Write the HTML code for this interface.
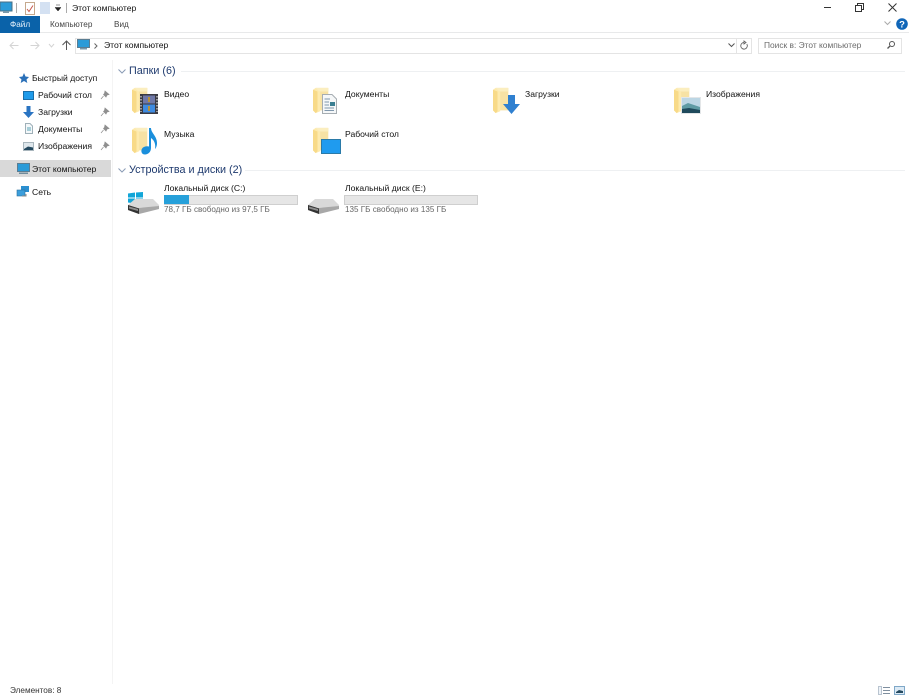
<!DOCTYPE html>
<html><head><meta charset="utf-8">
<style>
html,body{margin:0;padding:0;background:#fff;width:909px;height:699px;overflow:hidden}
#r{position:relative;width:909px;height:699px;font-family:"Liberation Sans",sans-serif;font-size:8.6px;color:#111;filter:blur(.35px)}
.t{position:absolute;white-space:nowrap;line-height:12px}
.b{position:absolute}
svg{position:absolute;overflow:visible}
.h{font-size:10.8px;color:#1e3a6e;line-height:14px}
.g{color:#666;font-size:8.1px}
.s{font-size:8.2px}
</style></head><body><div id="r">
<svg width="0" height="0">
<defs>
<symbol id="f" viewBox="0 0 20 28" overflow="visible">
<path d="M3 0H17V25H3z" fill="#f7e2a4"/>
<path d="M3 0H17V4H3z" fill="#fbeebf"/>
<path d="M0 2L3 0L8 5V26L3 28L0 25z" fill="#fdeaae"/>
<path d="M0 2L5 4V26L3 28L0 25z" fill="#f8da88"/>
</symbol>
<symbol id="d" viewBox="0 0 32 16" overflow="visible">
<path d="M7 1H25L31 7V9L8 10L0 7z" fill="#d9d9d9"/>
<path d="M0 7L10 10L31 8V11L11 16L0 12z" fill="#a8a8a8"/>
<path d="M0 7L11 10.500V16L0 12z" fill="#333"/>
<path d="M1 8.500L10 11V13L1 10.500z" fill="#8d8d8d"/>
</symbol>
<symbol id="pin" viewBox="0 0 8 8" overflow="visible">
<path d="M4 0L8 3.500L6 4L5 6L2.500 3.500L3.500 2.500z M2.500 5L0 8" fill="#8f8f8f" stroke="#8f8f8f" stroke-width=".7"/>
</symbol>
</defs>
</svg>

<!-- title bar -->
<svg style="left:-1px;top:1px" width="14" height="13"><rect x="1" y="1" width="12" height="9" fill="#2b9bd8" stroke="#4a6f85"/><rect x="4" y="10" width="6" height="2" fill="#7a98aa"/></svg>
<div class="b" style="left:16px;top:3px;width:1px;height:10px;background:#aaa"></div>
<svg style="left:25px;top:2px" width="10" height="13"><rect x=".5" y=".5" width="9" height="12" fill="#fff" stroke="#c5a98d"/><path d="M2 7L4 9.500L8 3.500" stroke="#c8574a" fill="none"/></svg>
<div class="b" style="left:40px;top:2px;width:10px;height:12px;background:#d4e1f2"></div>
<svg style="left:55px;top:5px" width="6" height="7"><path d="M1 0H5M0 2.500H6L3 6z" fill="#222" stroke="#222" stroke-width=".5"/></svg>
<div class="b" style="left:66px;top:3px;width:1px;height:10px;background:#aaa"></div>
<div class="t" style="left:72px;top:2px">Этот компьютер</div>
<div class="b" style="left:824px;top:7px;width:7px;height:1px;background:#333"></div>
<svg style="left:855px;top:3px" width="9" height="9"><path d="M.5 2.500H6.500V8.500H.5zM2.500 2.500V.5H8.500V6.500H6.500" fill="none" stroke="#333"/></svg>
<svg style="left:888px;top:3px" width="9" height="9"><path d="M.5 .5L8.500 8.500M8.500 .5L.5 8.500" stroke="#333"/></svg>

<!-- ribbon -->
<div class="b" style="left:0;top:16px;width:40px;height:17px;background:#0a62a9"></div>
<div class="t s" style="left:10px;top:19px;color:#e6f0fa">Файл</div>
<div class="t s" style="left:50px;top:19px;color:#444">Компьютер</div>
<div class="t s" style="left:114px;top:19px;color:#444">Вид</div>
<div class="b" style="left:40px;top:32px;width:869px;height:1px;background:#e8e9ea"></div>
<svg style="left:884px;top:21px" width="7" height="5"><path d="M.5 .5L3.500 3.500L6.500 .5" stroke="#aaa" fill="none"/></svg>
<svg style="left:896px;top:18px" width="12" height="12"><circle cx="6" cy="6" r="5.800" fill="#1066b8"/><text x="6" y="9.500" font-family="Liberation Sans" font-size="9.500" font-weight="bold" text-anchor="middle" fill="#fff">?</text></svg>

<!-- nav bar -->
<svg style="left:9px;top:41px" width="10" height="9"><path d="M9.500 4.500H1M4.500 1L1 4.500L4.500 8" stroke="#d4d4d4" fill="none"/></svg>
<svg style="left:30px;top:41px" width="10" height="9"><path d="M.5 4.500H9M5.500 1L9 4.500L5.500 8" stroke="#d4d4d4" fill="none"/></svg>
<svg style="left:49px;top:44px" width="5" height="3"><path d="M0 0L2.500 3L5 0" fill="none" stroke="#d4d4d4"/></svg>
<svg style="left:62px;top:40px" width="9" height="10"><path d="M4.500 10V1M.5 5L4.500 1L8.500 5" stroke="#555" fill="none"/></svg>
<div class="b" style="left:75px;top:38px;width:661px;height:14px;border:1px solid #e4e4e4;border-right:none"></div>
<div class="b" style="left:736px;top:38px;width:14px;height:14px;border:1px solid #e4e4e4"></div>
<svg style="left:77px;top:39px" width="13" height="11"><rect x=".5" y=".5" width="12" height="8" fill="#2b9bd8" stroke="#5b7d92"/><rect x="3" y="9" width="7" height="1.500" fill="#7a98aa"/></svg>
<svg style="left:94px;top:43px" width="4" height="6"><path d="M.5 .5L3 3L.5 5.500" stroke="#666" fill="none"/></svg>
<div class="t" style="left:104px;top:39px">Этот компьютер</div>
<svg style="left:728px;top:43px" width="7" height="5"><path d="M.5 .5L3.500 3.500L6.500 .5" stroke="#555" fill="none"/></svg>
<svg style="left:740px;top:41px" width="8" height="9"><path d="M6.800 3A3.300 3.300 0 1 1 4 1.500M4 0V3L6 1.500z" stroke="#666" fill="none" stroke-width=".9"/></svg>
<div class="b" style="left:758px;top:38px;width:142px;height:14px;border:1px solid #e4e4e4"></div>
<div class="t" style="left:764px;top:39px;color:#6d6d6d;font-size:8.4px">Поиск в: Этот компьютер</div>
<svg style="left:887px;top:41px" width="8" height="8"><circle cx="5" cy="3" r="2.500" fill="none" stroke="#555"/><path d="M3 5L.5 7.500" stroke="#555" stroke-width="1.300"/></svg>

<!-- sidebar -->
<div class="b" style="left:112px;top:60px;width:1px;height:624px;background:#f4f4f4"></div>
<svg style="left:19px;top:73px" width="10" height="10"><path d="M5 0L6.500 3.500L10 4L7.500 6.500L8.300 10L5 8L1.700 10L2.500 6.500L0 4L3.500 3.500z" fill="#2a70b8"/></svg>
<div class="t" style="left:32px;top:72px">Быстрый доступ</div>
<svg style="left:23px;top:91px" width="11" height="9"><rect x=".5" y=".5" width="10" height="8" fill="#1f9bea" stroke="#1a6ea8"/></svg>
<div class="t" style="left:38px;top:89px">Рабочий стол</div>
<svg style="left:23px;top:106px" width="11" height="12"><path d="M3.500 0H7.500V6H11L5.500 12L0 6H3.500z" fill="#2a74c2"/></svg>
<div class="t" style="left:38px;top:106px">Загрузки</div>
<svg style="left:25px;top:123px" width="8" height="11"><path d="M.5 .5H5L7.500 3V10.500H.5z" fill="#f4f8fa" stroke="#9fb0b8"/><path d="M2 5H6M2 7H6" stroke="#5aa3b5"/></svg>
<div class="t" style="left:38px;top:123px">Документы</div>
<svg style="left:23px;top:142px" width="11" height="9"><rect x=".5" y=".5" width="10" height="8" fill="#dfe7ec" stroke="#a9b6bd"/><path d="M1 7L5 4.500L10 5.500V8H1z" fill="#24495f"/></svg>
<div class="t" style="left:38px;top:140px">Изображения</div>
<svg style="left:101px;top:91px" width="8" height="8"><use href="#pin" width="8" height="8"/></svg>
<svg style="left:101px;top:108px" width="8" height="8"><use href="#pin" width="8" height="8"/></svg>
<svg style="left:101px;top:125px" width="8" height="8"><use href="#pin" width="8" height="8"/></svg>
<svg style="left:101px;top:142px" width="8" height="8"><use href="#pin" width="8" height="8"/></svg>
<div class="b" style="left:0;top:160px;width:111px;height:17px;background:#d9d9d9"></div>
<svg style="left:17px;top:163px" width="13" height="12"><rect x=".5" y=".5" width="12" height="8" fill="#2b9bd8" stroke="#5b7d92"/><rect x="2" y="9.500" width="9" height="1.500" fill="#6f8b9c"/></svg>
<div class="t" style="left:32px;top:163px">Этот компьютер</div>
<svg style="left:17px;top:186px" width="12" height="11"><rect x="4" y="0" width="8" height="6" fill="#2b8fd0"/><rect x="0" y="4" width="8" height="6" fill="#3c9edb" stroke="#2a6f9f" stroke-width=".6"/><path d="M5 10H9V8" stroke="#888" fill="none"/></svg>
<div class="t" style="left:32px;top:186px">Сеть</div>

<!-- Folders section -->
<svg style="left:118px;top:69px" width="8" height="5"><path d="M.5 .5L4 4L7.500 .5" stroke="#8a9bb5" fill="none"/></svg>
<div class="t h" style="left:129px;top:64px">Папки (6)</div>
<div class="b" style="left:181px;top:71px;width:724px;height:1px;background:#eef0f2"></div>

<svg style="left:132px;top:87px" width="18" height="27"><use href="#f" width="18" height="27"/></svg>
<svg style="left:140px;top:94px" width="18" height="20"><rect width="18" height="20" fill="#3a3a42"/><rect x="3" y="1.500" width="12" height="8" fill="#6f78a8"/><rect x="3" y="10.500" width="12" height="8" fill="#3f8be0"/><path d="M8 3H10V8H8zM8 12H10V17H8z" fill="#b8923a"/><path d="M1 2V18M17 2V18" stroke="#ddd" stroke-dasharray="1.500 1.500" stroke-width="1.200"/></svg>
<div class="t" style="left:164px;top:88px">Видео</div>

<svg style="left:313px;top:87px" width="18" height="27"><use href="#f" width="18" height="27"/></svg>
<svg style="left:322px;top:94px" width="15" height="20"><path d="M.5 .5H10L14.500 5V19.500H.5z" fill="#f5f7f8" stroke="#a6adb2"/><path d="M2.500 5H8M2.500 8H7M2.500 11H7M2.500 14H12M2.500 16.500H12" stroke="#7f97ad"/><rect x="8" y="8" width="5" height="4" fill="#3a7f92"/></svg>
<div class="t" style="left:345px;top:88px">Документы</div>

<svg style="left:493px;top:87px" width="18" height="27"><use href="#f" width="18" height="27"/></svg>
<svg style="left:503px;top:95px" width="17" height="19"><path d="M5 0H12V9H17L8.500 19L0 9H5z" fill="#2f80d0"/></svg>
<div class="t" style="left:525px;top:88px">Загрузки</div>

<svg style="left:674px;top:87px" width="18" height="27"><use href="#f" width="18" height="27"/></svg>
<svg style="left:681px;top:97px" width="20" height="17"><rect width="20" height="17" fill="#e3e6e8"/><rect x="1" y="1" width="18" height="15" fill="#bcd6e4"/><path d="M1 9L7 6L19 10V16H1z" fill="#5f9ba4"/><path d="M1 12L8 11L19 13V16H1z" fill="#1f4a5c"/></svg>
<div class="t" style="left:706px;top:88px">Изображения</div>

<svg style="left:132px;top:127px" width="18" height="27"><use href="#f" width="18" height="27"/></svg>
<svg style="left:141px;top:128px" width="17" height="27"><path d="M8 0H10C10 5 16 8 16 15C16 18 15 20 14 21C15 16 13 12 10 10V20C10 24 7 26.500 4 26.500C1 26.500 0 24 .500 22C1 19 5 17.500 8 18.500z" fill="#1a8fdc"/></svg>
<div class="t" style="left:164px;top:128px">Музыка</div>

<svg style="left:313px;top:127px" width="18" height="27"><use href="#f" width="18" height="27"/></svg>
<svg style="left:321px;top:139px" width="20" height="15"><rect x=".5" y=".5" width="19" height="14" fill="#1f9bef" stroke="#2a7aa8"/></svg>
<div class="t" style="left:345px;top:128px">Рабочий стол</div>

<!-- Drives -->
<svg style="left:118px;top:168px" width="8" height="5"><path d="M.5 .5L4 4L7.500 .5" stroke="#8a9bb5" fill="none"/></svg>
<div class="t h" style="left:129px;top:163px">Устройства и диски (2)</div>
<div class="b" style="left:245px;top:170px;width:660px;height:1px;background:#eef0f2"></div>

<svg style="left:128px;top:192px" width="15" height="12"><path d="M0 1.500L7 .5V5.500H0zM8 .5L15 0V5.500H8zM0 6.500H7V11.500L0 10.500zM8 6.500H15V12L8 11.500z" fill="#12a6d8"/></svg>
<svg style="left:128px;top:198px" width="32" height="16"><use href="#d" width="32" height="16"/></svg>
<div class="t" style="left:164px;top:182px">Локальный диск (C:)</div>
<div class="b" style="left:164px;top:195px;width:132px;height:8px;background:#e6e6e6;border:1px solid #cfcfcf"></div>
<div class="b" style="left:164px;top:195px;width:25px;height:9px;background:#26a0da"></div>
<div class="t g" style="left:164px;top:204px">78,7 ГБ свободно из 97,5 ГБ</div>

<svg style="left:308px;top:198px" width="32" height="16"><use href="#d" width="32" height="16"/></svg>
<div class="t" style="left:345px;top:182px">Локальный диск (E:)</div>
<div class="b" style="left:344px;top:195px;width:132px;height:8px;background:#e6e6e6;border:1px solid #cfcfcf"></div>
<div class="t g" style="left:345px;top:204px">135 ГБ свободно из 135 ГБ</div>

<!-- status -->
<div class="t s" style="left:10px;top:685px;color:#333">Элементов: 8</div>
<svg style="left:878px;top:686px" width="12" height="9"><path d="M.5 .5H3.500V8.500H.5z" fill="#eef3f8" stroke="#b9c4d0"/><path d="M5 1.500H12M5 4.500H12M5 7.500H12" stroke="#7f8f9f"/></svg>
<svg style="left:894px;top:686px" width="11" height="9"><rect x=".5" y=".5" width="10" height="8" fill="#dceaf5" stroke="#7fa8c8"/><path d="M2 6L5 4L9 5V7H2z" fill="#24495f"/></svg>
</div></body></html>
